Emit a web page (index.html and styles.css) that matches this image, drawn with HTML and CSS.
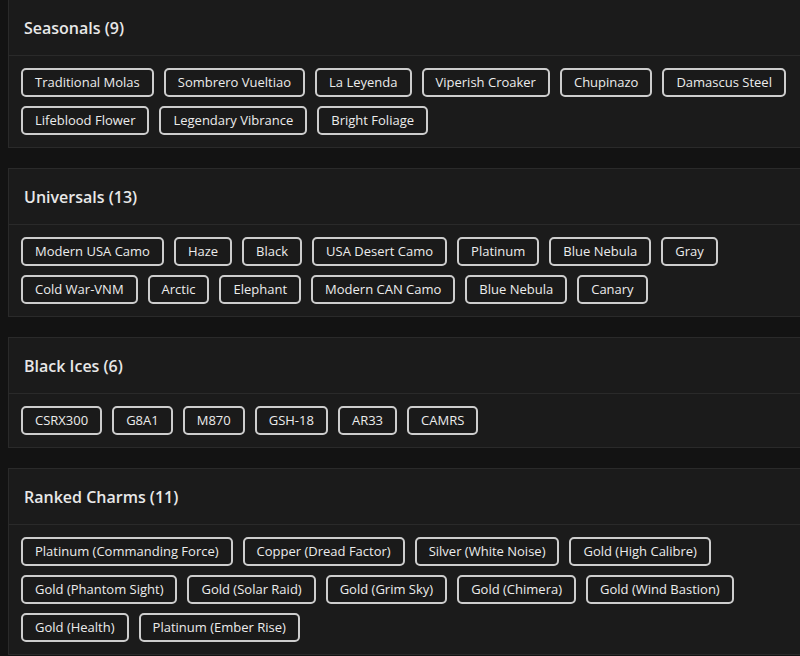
FILE: index.html
```html
<!DOCTYPE html>
<html>

<head>
    <title>Skins</title>
    <link rel="stylesheet" href="styles.css">
</head>

<body>
    <div class="list">

        <div class="card">
            <div class="card-head">Seasonals (9)</div>
            <div class="tags">
                <span class="tag">Traditional Molas</span>
                <span class="tag">Sombrero Vueltiao</span>
                <span class="tag">La Leyenda</span>
                <span class="tag">Viperish Croaker</span>
                <span class="tag">Chupinazo</span>
                <span class="tag">Damascus Steel</span>
                <span class="tag">Lifeblood Flower</span>
                <span class="tag">Legendary Vibrance</span>
                <span class="tag">Bright Foliage</span>
            </div>
        </div>

        <div class="card">
            <div class="card-head">Universals (13)</div>
            <div class="tags">
                <span class="tag">Modern USA Camo</span>
                <span class="tag">Haze</span>
                <span class="tag">Black</span>
                <span class="tag">USA Desert Camo</span>
                <span class="tag">Platinum</span>
                <span class="tag">Blue Nebula</span>
                <span class="tag">Gray</span>
                <span class="tag">Cold War-VNM</span>
                <span class="tag">Arctic</span>
                <span class="tag">Elephant</span>
                <span class="tag">Modern CAN Camo</span>
                <span class="tag">Blue Nebula</span>
                <span class="tag">Canary</span>
            </div>
        </div>

        <div class="card">
            <div class="card-head">Black Ices (6)</div>
            <div class="tags">
                <span class="tag">CSRX300</span>
                <span class="tag">G8A1</span>
                <span class="tag">M870</span>
                <span class="tag">GSH-18</span>
                <span class="tag">AR33</span>
                <span class="tag">CAMRS</span>
            </div>
        </div>

        <div class="card">
            <div class="card-head">Ranked Charms (11)</div>
            <div class="tags">
                <span class="tag">Platinum (Commanding Force)</span>
                <span class="tag">Copper (Dread Factor)</span>
                <span class="tag">Silver (White Noise)</span>
                <span class="tag">Gold (High Calibre)</span>
                <span class="tag">Gold (Phantom Sight)</span>
                <span class="tag">Gold (Solar Raid)</span>
                <span class="tag">Gold (Grim Sky)</span>
                <span class="tag">Gold (Chimera)</span>
                <span class="tag">Gold (Wind Bastion)</span>
                <span class="tag">Gold (Health)</span>
                <span class="tag">Platinum (Ember Rise)</span>
            </div>
        </div>

    </div>
</body>

</html>
```

FILE: styles.css
```css
body {
    margin: 0;
    background-color: #131313;
    font-family: "Open Sans", "Noto Sans", sans-serif;
    color: #e4e4e4;
    overflow: hidden;
}

.list {
    display: flex;
    flex-direction: column;
    gap: 20px;
    width: 830px;
    margin-top: -1px;
    padding-left: 8px;
}

.card {
    background-color: #1b1b1b;
    border: 1px solid #2a2a2a;
}

.card-head {
    display: flex;
    align-items: center;
    height: 55px;
    padding: 0 15px;
    border-bottom: 1px solid #2a2a2a;
    font-size: 16px;
    font-weight: 600;
    color: #e8e8e8;
}

.tags {
    display: flex;
    flex-wrap: wrap;
    gap: 9px 10px;
    padding: 12px;
}

.tag {
    display: inline-block;
    height: 25px;
    line-height: 25px;
    padding: 0 12px;
    border: 2px solid #cdcdcd;
    border-radius: 5px;
    background-color: #1a1a1a;
    font-size: 13px;
    color: #ececec;
}
```
